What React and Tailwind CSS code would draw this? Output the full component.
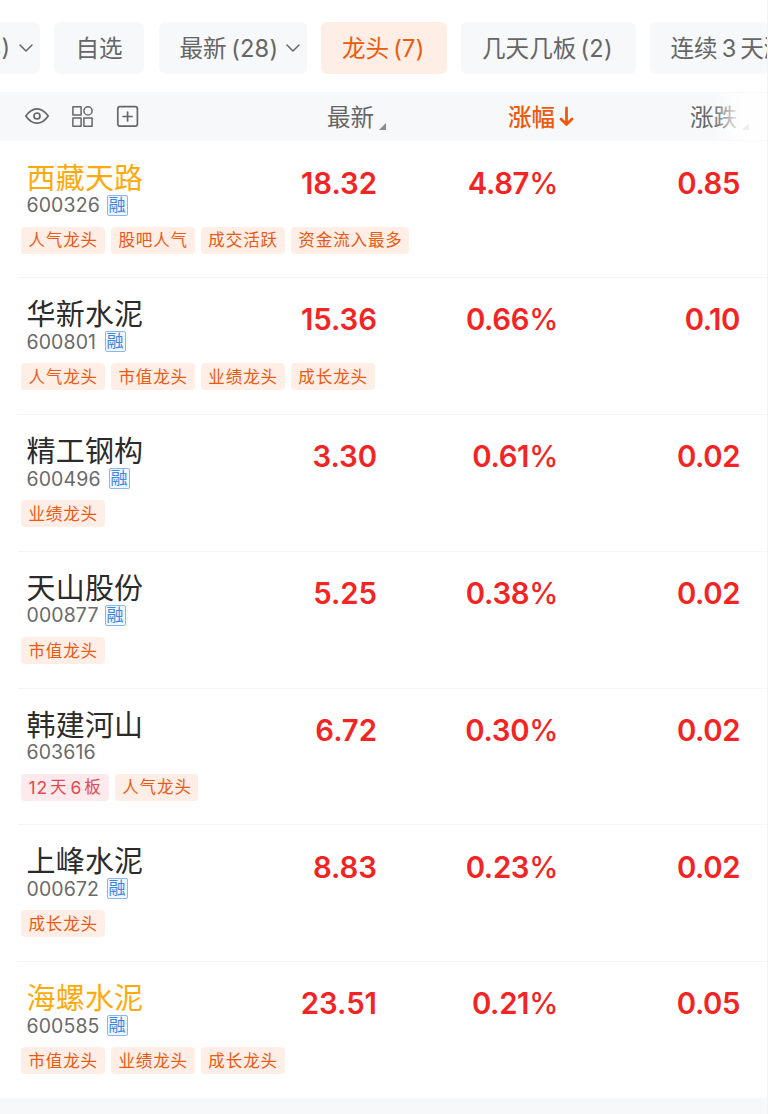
const stocks = [
  { name: "西藏天路", code: "600326", codeW: "w-[73px]", margin: true, hot: true, price: "18.32", pct: "4.87", diff: "0.85", tags: ["人气龙头", "股吧人气", "成交活跃", "资金流入最多"] },
  { name: "华新水泥", code: "600801", codeW: "w-[71px]", margin: true, price: "15.36", pct: "0.66", diff: "0.10", tags: ["人气龙头", "市值龙头", "业绩龙头", "成长龙头"] },
  { name: "精工钢构", code: "600496", codeW: "w-[75px]", margin: true, price: "3.30", pct: "0.61", diff: "0.02", tags: ["业绩龙头"] },
  { name: "天山股份", code: "000877", codeW: "w-[71px]", margin: true, price: "5.25", pct: "0.38", diff: "0.02", tags: ["市值龙头"] },
  { name: "韩建河山", code: "603616", codeW: "w-[71px]", price: "6.72", pct: "0.30", diff: "0.02", streak: true, tags: ["人气龙头"] },
  { name: "上峰水泥", code: "000672", codeW: "w-[73px]", margin: true, price: "8.83", pct: "0.23", diff: "0.02", tags: ["成长龙头"] },
  { name: "海螺水泥", code: "600585", codeW: "w-[73px]", margin: true, hot: true, price: "23.51", pct: "0.21", diff: "0.05", tags: ["市值龙头", "业绩龙头", "成长龙头"] },
];

function Chevron() {
  return (
    <svg className="h-2 w-[14px] shrink-0" viewBox="0 0 14 8" fill="none" stroke="#666" strokeWidth="1.5" strokeLinecap="round" strokeLinejoin="round">
      <path d="M1 1l6 6 6-6" />
    </svg>
  );
}

function SortMark() {
  return (
    <svg className="ml-[5px] mt-[21px] h-[7px] w-[7px]" viewBox="0 0 7 7" fill="#8c8c8c">
      <path d="M7 0v7H0z" />
    </svg>
  );
}

function Toolbar() {
  return (
    <div className="ml-6 flex items-center text-[#666]">
      <svg className="h-[18px] w-[26px]" viewBox="0 0 26 18" fill="none" stroke="currentColor" strokeWidth="1.7" strokeLinejoin="round">
        <path d="M1.800 9C5 4.400 8.500 1.800 13 1.800S21 4.400 24.200 9C21 13.600 17.500 16.200 13 16.200S5 13.600 1.800 9z" />
        <circle cx="13" cy="9" r="3" />
      </svg>
      <svg className="ml-[21px] h-[23px] w-[23px]" viewBox="0 0 23 23" fill="none" stroke="currentColor" strokeWidth="1.5" strokeLinejoin="round">
        <rect x="1.900" y="1.700" width="8.200" height="8.200" />
        <circle cx="17" cy="5.900" r="4.100" />
        <rect x="1.900" y="13" width="8.200" height="8.200" />
        <rect x="12.900" y="13" width="8.200" height="8.200" />
      </svg>
      <svg className="ml-[22px] h-[23px] w-[23px]" viewBox="0 0 23 23" fill="none" stroke="currentColor" strokeWidth="1.7" strokeLinecap="round">
        <rect x="1.800" y="1.600" width="19.600" height="19.600" rx="2.200" />
        <path d="M11.600 7v9M7.100 11.500h9" />
      </svg>
    </div>
  );
}

function Tag({ children }) {
  return (
    <span className="flex h-[27px] shrink-0 items-center rounded-[4px] bg-[#feeee6] pl-[7.400px] pr-[6.700px] pt-px text-[16.500px] tracking-[0.900px] text-[#ea5a14]">
      {children}
    </span>
  );
}

function Row({ stock }) {
  return (
    <div className="h-[136.800px]">
      <div className="flex h-[86px] pt-[21px]">
        <div className="w-[227px] pl-[26.500px]">
          <div className={`h-8 whitespace-nowrap pt-px text-[29px] leading-8 tracking-[0.200px] ${stock.hot ? "text-[#ffaa0c]" : "text-[#2b2b2b]"}`}>
            {stock.name}
          </div>
          <div className="flex h-[23px] items-center">
            <span className={`${stock.codeW} pt-px text-[19.500px] leading-[23px] tracking-[0.100px] text-[#6a6a6a]`}>{stock.code}</span>
            {stock.margin && (
              <span className="ml-[7px] flex h-[21px] w-[21px] items-center justify-center rounded-[2px] border border-[#8ab6ef] bg-[#f0f6ff] text-[17px] leading-none text-[#3b86e0]">
                融
              </span>
            )}
          </div>
        </div>
        <div className="flex h-11 w-[150px] items-center justify-end text-[29.300px] font-semibold text-[#f32424]">{stock.price}</div>
        <div className="flex h-11 w-[181px] items-center justify-end text-[29.300px] font-semibold tracking-[-0.300px] text-[#f32424]">
          {stock.pct}
          <span className="font-medium">%</span>
        </div>
        <div className="flex h-11 w-[182px] items-center justify-end text-[29.300px] font-semibold tracking-[-0.400px] text-[#f32424]">{stock.diff}</div>
      </div>
      <div className="flex gap-[6.300px] pl-[21px]">
        {stock.streak && (
          <span className="flex h-[27px] w-[87.500px] items-center rounded-[4px] bg-[#feeaec] pl-[7.400px] pt-px text-[16.500px] tracking-[0.900px] text-[#e04a50]">
            <span className="mr-[2px] text-[17.500px]">12</span>天<span className="ml-[3px] mr-[2px] text-[17.500px]">6</span>板
          </span>
        )}
        {stock.tags.map((tag) => (
          <Tag key={tag}>{tag}</Tag>
        ))}
      </div>
    </div>
  );
}

export default function App() {
  return (
    <div className="flex h-[1114px] w-[768px] flex-col overflow-hidden border-r border-[#f3f3f5] bg-white font-['Inter','Noto_Sans_CJK_SC',sans-serif]">
      {/* Category tabs */}
      <div className="flex h-[92px] shrink-0 items-start overflow-hidden whitespace-nowrap pt-[22px] text-[23.600px] text-[#666]">
        <div className="flex h-[52px] w-10 shrink-0 items-center justify-end rounded-r-[6px] bg-[#f7f8fa] pr-[7px]">
          <span className="mr-[9px] pt-0.5">8)</span>
          <Chevron />
        </div>
        <div className="ml-[14px] flex h-[52px] w-[90px] shrink-0 items-center justify-center rounded-[6px] bg-[#f7f8fa] pt-0.5">自选</div>
        <div className="ml-[15px] flex h-[52px] w-[148px] shrink-0 items-center rounded-[6px] bg-[#f7f8fa] pl-[20.500px]">
          <span className="pt-0.5">最新</span>
          <span className="ml-[4.500px] w-[55px] pt-0.5 tracking-[0.200px]">(28)</span>
          <Chevron />
        </div>
        <div className="ml-[14px] flex h-[52px] w-[126px] shrink-0 items-center rounded-[6px] bg-[#ffeee5] pl-[21px] pt-0.5 text-[#ee5a0c]">
          龙头<span className="ml-1 tracking-[0.300px]">(7)</span>
        </div>
        <div className="ml-[14px] flex h-[52px] w-[175px] shrink-0 items-center rounded-[6px] bg-[#f7f8fa] pl-[21px] pt-0.5">
          几天几板<span className="ml-1 tracking-[0.300px]">(2)</span>
        </div>
        <div className="ml-[14px] flex h-[52px] w-[160px] shrink-0 items-center rounded-[6px] bg-[#f7f8fa] pl-[20.500px] pt-0.5">
          连续<span className="mx-1">3</span>天涨
        </div>
      </div>

      {/* Table header */}
      <div className="relative flex h-[48.500px] shrink-0 items-center overflow-hidden whitespace-nowrap bg-[#f7f8fa] text-[23.600px] text-[#666]">
        <div className="w-[327px]">
          <Toolbar />
        </div>
        <div className="flex w-[181px] items-center">
          <span className="pt-0.5">最新</span>
          <SortMark />
        </div>
        <div className="flex w-[182px] items-center text-[#ee5a0c]">
          <span className="pt-0.5 font-medium">涨幅</span>
          <svg className="ml-1 h-[21px] w-[15px]" viewBox="0 0 15 21" fill="none" stroke="currentColor" strokeWidth="2.800" strokeLinecap="round" strokeLinejoin="round">
            <path d="M7.500 2v16M2 13l5.500 5.500L13 13" />
          </svg>
        </div>
        <div className="flex items-center">
          <span className="pt-0.5">涨跌</span>
          <SortMark />
        </div>
        <div className="absolute inset-y-px right-0 w-[54px] bg-linear-to-r from-white/0 via-white/75 via-40% to-white"></div>
      </div>

      {/* Stock list */}
      {stocks.map((stock, i) => (
        <div key={stock.code} className="shrink-0">
          {i > 0 && <div className="-mb-px ml-[18px] h-px bg-[#f5f5f6]"></div>}
          <Row stock={stock} />
        </div>
      ))}
      <div className="flex-1 bg-[#f7f8fa]"></div>
    </div>
  );
}
